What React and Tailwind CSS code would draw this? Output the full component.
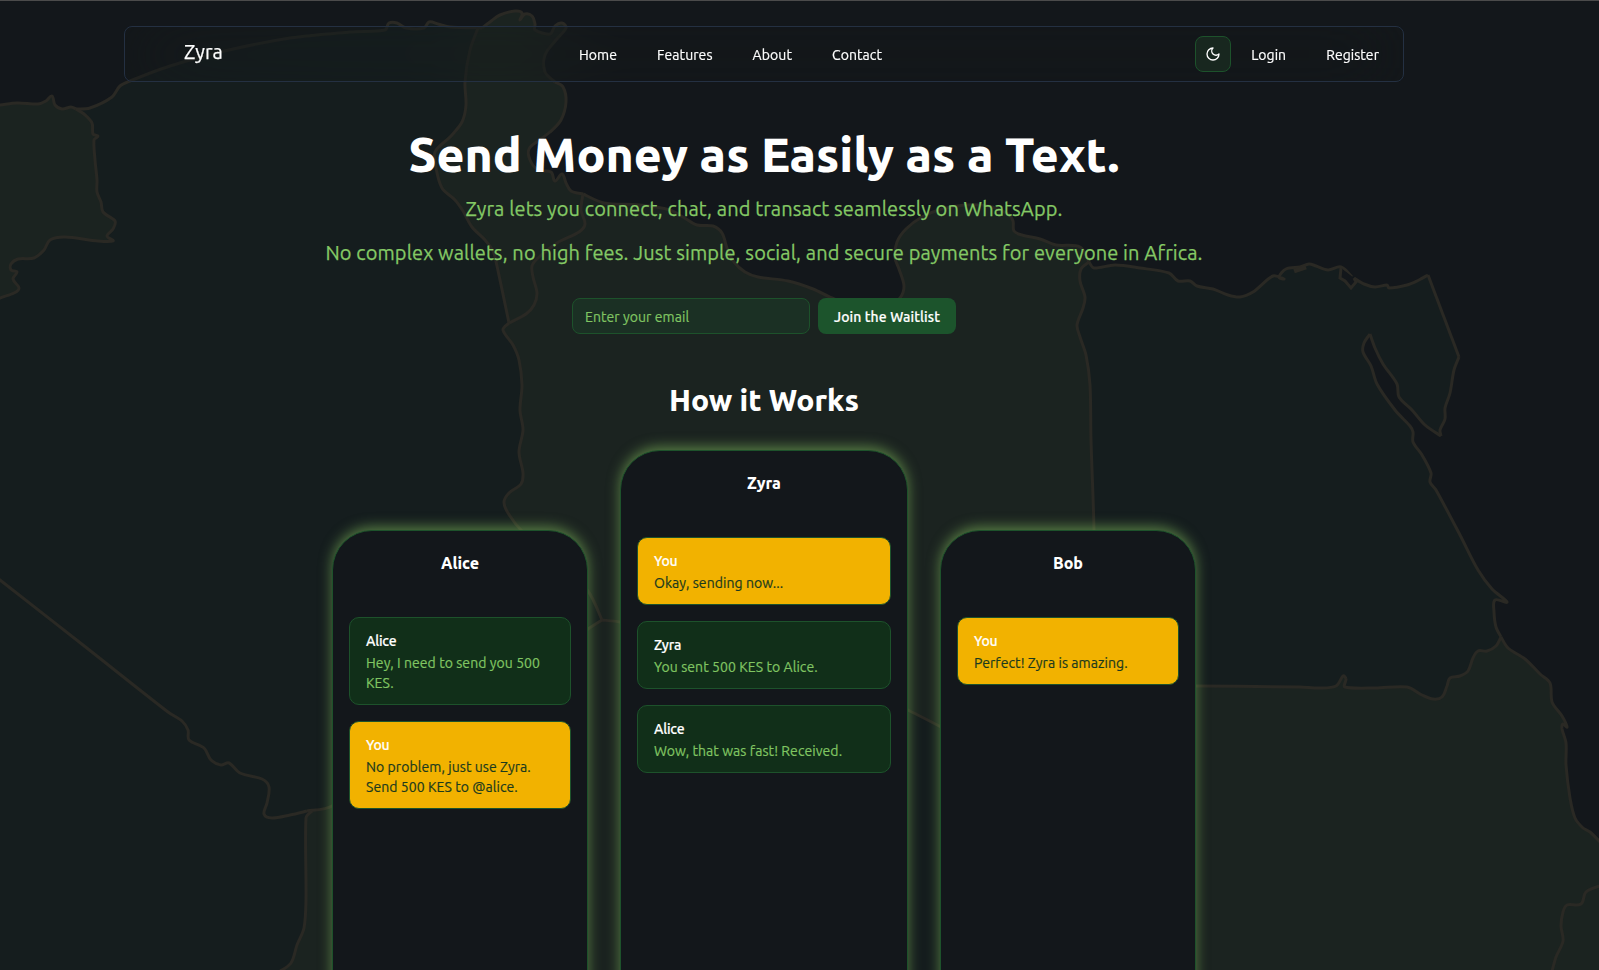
const TEAL = '#151d1e';
const GREEN = '#1b2320';
const BORDER = '#2a2924';

// Country borders as point lists, in page coordinates.
const moroccoCoast = [[-10, 106], [0, 105], [17, 103], [38, 104], [46, 101], [52, 96], [55, 105], [62, 109], [71, 107], [76, 109]];
const moroccoBorder = [[76, 109], [84, 114], [92, 123], [93, 134], [98, 136], [94, 140], [95, 160], [97, 180], [97, 192], [101, 202], [103, 212], [115, 221], [113, 229], [107, 236], [113, 241], [98, 241], [65, 237], [50, 240], [44, 250], [34, 258], [18, 259], [11, 264], [11, 270], [17, 272], [13, 279], [19, 288], [14, 293], [0, 298], [-10, 303]];
const algeriaCoast = [[76, 109], [90, 108], [112, 97], [120, 86], [130, 81], [170, 66], [220, 52], [290, 38], [350, 32], [385, 30], [389, 23], [397, 23], [406, 28], [424, 28], [429, 22], [438, 24], [450, 27], [482, 28]];
const tunisiaNorth = [[482, 28], [490, 22], [500, 15], [515, 11], [522, 13], [520, 20], [525, 14], [532, 16], [535, 24], [535, 30], [550, 34], [555, 26], [562, 23], [566, 28], [556, 40], [545, 55], [545, 72], [555, 82]];
const tunisiaEast = [[555, 82], [563, 87], [566, 102], [561, 120], [550, 132], [538, 141], [529, 149], [530, 160], [538, 170], [551, 172], [555, 181], [562, 174], [566, 183], [571, 191], [583, 194]];
const tunisiaWest = [[478, 28], [470, 50], [465, 82], [466, 105], [462, 122], [450, 137], [435, 152], [436, 168], [442, 188], [455, 200], [463, 211], [472, 227], [485, 240], [493, 251], [497, 266], [509, 323]];
const tunisiaLibya = [[583, 194], [581, 210], [585, 224], [579, 232], [557, 243], [538, 258], [532, 266], [533, 277], [537, 293], [534, 305], [526, 314], [509, 323]];
const libyaCoast = [[583, 194], [604, 203], [640, 205], [670, 210], [683, 217], [697, 225], [713, 226], [722, 233], [727, 248], [734, 262], [745, 272], [758, 277], [788, 281], [813, 289], [832, 298], [858, 308], [885, 310], [900, 298], [904, 286], [899, 269], [895, 258], [897, 242], [906, 229], [922, 217], [942, 209], [965, 205], [988, 206], [1008, 214], [1013, 221], [1014, 231], [1022, 235], [1040, 239], [1056, 245], [1080, 247], [1089, 262]];
const libyaEgypt = [[1089, 262], [1081, 269], [1080, 281], [1085, 297], [1083, 308], [1077, 325], [1080, 337], [1086, 355], [1090, 385], [1091, 440], [1094, 530], [1096, 686]];
const egyptCoast = [[1089, 262], [1094, 268], [1115, 265], [1140, 268], [1169, 273], [1178, 281], [1190, 281], [1197, 286], [1213, 289], [1228, 295], [1240, 297], [1253, 292], [1273, 276], [1284, 279], [1279, 277], [1286, 269], [1300, 267], [1309, 264], [1316, 266], [1328, 270], [1341, 267], [1352, 277]];
const egyptSinai = [[1354, 278], [1364, 284], [1375, 287], [1387, 285], [1389, 288], [1407, 285], [1419, 280], [1428, 275]];
const egyptEast = [[1428, 275], [1459, 357]];
const egyptAqaba = [[1459, 357], [1454, 370], [1450, 393], [1445, 408], [1445, 419], [1440, 430], [1441, 436]];
const egyptGulf = [[1441, 436], [1425, 425], [1412, 410], [1399, 397], [1397, 384], [1383, 364], [1375, 348], [1370, 334]];
const egyptShore = [[1370, 334], [1364, 343], [1363, 352], [1371, 366], [1377, 384], [1395, 410], [1410, 426], [1413, 432], [1413, 442], [1422, 455], [1431, 473], [1430, 482], [1436, 490], [1460, 535], [1478, 570], [1492, 589], [1507, 602], [1495, 600], [1494, 612], [1496, 627], [1501, 637]];
const egyptSudan = [[1501, 637], [1496, 646], [1487, 651], [1478, 651], [1473, 658], [1468, 671], [1460, 676], [1450, 678], [1447, 686], [1442, 697], [1433, 699], [1422, 695], [1407, 687], [1375, 688], [1345, 687], [1346, 679], [1343, 676], [1336, 686], [1320, 688], [1300, 687], [1196, 686], [1096, 686]];
const sudanCoast = [[1501, 637], [1508, 648], [1525, 659], [1540, 674], [1550, 683], [1552, 702], [1562, 716], [1567, 727], [1563, 724], [1562, 729], [1566, 743], [1566, 765], [1570, 798], [1575, 818], [1583, 828], [1590, 832], [1603, 845]];
const sudanEast = [[1603, 885], [1586, 892], [1581, 904], [1567, 905], [1563, 912], [1561, 926], [1563, 941], [1556, 957], [1551, 975]];
const libyaAlgeria = [[509, 323], [503, 330], [513, 345], [519, 360], [522, 385], [520, 410], [523, 430], [519, 452], [523, 473], [521, 484], [509, 493], [504, 502], [508, 513], [522, 531], [560, 565], [588, 591], [602, 620]];
const libyaSouth = [[602, 620], [620, 622], [700, 640], [830, 670], [908, 710], [941, 727], [1000, 760], [1096, 790]];
const algeriaMali = [[-5, 576], [0, 580], [83, 645], [168, 712], [182, 721], [188, 730], [189, 740], [204, 748], [211, 760], [221, 765], [229, 763], [240, 773], [262, 779], [269, 787], [267, 803], [264, 814], [272, 818], [290, 815], [307, 811]];
const nigerNorth = [[307, 811], [332, 806], [588, 629], [602, 620]];
const nigerMali = [[312, 811], [306, 818], [306, 900], [304, 928], [297, 945], [291, 963], [279, 972]];

function smooth(pts, start = 'M') {
  let d = `${start}${pts[0][0]} ${pts[0][1]}`;
  for (let i = 0; i < pts.length - 1; i++) {
    const p0 = pts[i - 1] || pts[i];
    const p1 = pts[i];
    const p2 = pts[i + 1];
    const p3 = pts[i + 2] || p2;
    const len = Math.hypot(p2[0] - p1[0], p2[1] - p1[1]);
    const handle = (a, b) => {
      const l = Math.hypot(b[0] - a[0], b[1] - a[1]) || 1;
      const k = Math.min(len / 3.2, l / 5) / l;
      return [(b[0] - a[0]) * k, (b[1] - a[1]) * k];
    };
    const [ax, ay] = handle(p0, p2);
    const [bx, by] = handle(p1, p3);
    d += `C${(p1[0] + ax).toFixed(1)} ${(p1[1] + ay).toFixed(1)} ${(p2[0] - bx).toFixed(1)} ${(p2[1] - by).toFixed(1)} ${p2[0]} ${p2[1]}`;
  }
  return d;
}

const area = (...segs) => segs.map((s, i) => smooth(s, i ? 'L' : 'M')).join('') + 'Z';
const rev = (s) => [...s].reverse();

const areas = [
  [TEAL, area(moroccoCoast, algeriaCoast, [[470, 60], [470, 200]], [[520, 320], [620, 620]], [[620, 980], [-10, 980]])],
  [TEAL, area([[900, 690], [1196, 680]], [[1196, 980], [900, 980]])],
  [GREEN, area(moroccoCoast, moroccoBorder)],
  [GREEN, area(tunisiaNorth, tunisiaEast, tunisiaLibya, rev(tunisiaWest))],
  [GREEN, area(libyaCoast, libyaEgypt, rev(libyaSouth), rev(libyaAlgeria), rev(tunisiaLibya))],
  [TEAL, area(egyptCoast, egyptSinai, egyptEast, egyptAqaba, egyptGulf, egyptShore, egyptSudan, rev(libyaEgypt))],
  [GREEN, area(sudanCoast, [[1603, 980], [1150, 980]], [[1150, 686]], rev(egyptSudan))],
  [GREEN, area(nigerNorth, [[764, 640], [764, 980]], rev(nigerMali))],
];

const lines = [moroccoCoast, moroccoBorder, algeriaCoast, tunisiaNorth, tunisiaEast, tunisiaWest, tunisiaLibya, libyaCoast, libyaEgypt, egyptCoast, egyptSinai, egyptEast, egyptAqaba, egyptGulf, egyptShore, egyptSudan, sudanCoast, sudanEast, libyaAlgeria, libyaSouth, algeriaMali, nigerNorth, nigerMali];

function AfricaMap() {
  return (
    <svg className="absolute inset-0" width="1599" height="970" viewBox="0 0 1599 970" aria-hidden="true">
      {areas.map(([fill, d], i) => (
        <path key={i} d={d} fill={fill} />
      ))}
      <g fill="none" stroke={BORDER} strokeWidth="3" strokeLinejoin="miter">
        {lines.map((pts, i) => (
          <path key={i} d={smooth(pts)} />
        ))}
        <path d="M1294 271L1306 267" strokeWidth="5" />
        <path d="M1341 268L1340 278L1345 281L1351 288L1356 282L1354 278" fill="#13171b" />
      </g>
    </svg>
  );
}

function Message({ name, text, mine }) {
  return (
    <div className={`rounded-[10px] border border-[#1d522b] px-4 pt-[13px] pb-[11px] ${mine ? 'bg-[#f2b200]' : 'bg-[#112f19]'}`}>
      <div className="text-sm font-medium tracking-[-0.2px] text-white [-webkit-text-stroke:0.2px]">{name}</div>
      <div className={`mt-0.5 text-sm tracking-[0.07px] [-webkit-text-stroke:0.2px] ${mine ? 'text-[#1b3a1e]' : 'text-[#80c562]'}`}>{text}</div>
    </div>
  );
}

function Phone({ title, messages, large }) {
  return (
    <div
      className={`h-[600px] shrink-0 rounded-[40px] border border-[#1d522b] bg-[#13171b] px-4 pt-5 shadow-[0_-3px_13px_rgba(135,195,95,0.58)] ${large ? 'w-72' : 'mt-20 w-64'}`}
    >
      <h3 className="text-center text-base font-extrabold tracking-[-0.05px] text-white">{title}</h3>
      <div className="mt-[42px] flex flex-col gap-4">
        {messages.map((m, i) => (
          <Message key={i} {...m} />
        ))}
      </div>
    </div>
  );
}

const links = ['Home', 'Features', 'About', 'Contact'];

export default function App() {
  return (
    <div className="relative h-[970px] w-[1599px] overflow-hidden bg-[#13171b] font-['Ubuntu','Ubuntu_Sans','Noto_Sans',sans-serif] text-white">
      <AfricaMap />
      <div className="relative flex flex-col items-center border-t border-[#4b4b4b] pr-[71px]">
        <nav className="mt-[25px] flex h-14 w-[1280px] items-center rounded-lg border border-[#243042] bg-[#13171b]/20 backdrop-blur-2xl">
          <div className="w-[454px] pb-1 pl-[59px] text-xl tracking-[0.1px] [-webkit-text-stroke:0.25px]">Zyra</div>
          <div className="flex gap-10 pt-0.5 text-sm tracking-[0.08px] [-webkit-text-stroke:0.2px]">
            {links.map((l) => (
              <a key={l} href="#">{l}</a>
            ))}
          </div>
          <div className="ml-auto flex items-center pr-6 text-sm tracking-[0.05px] [-webkit-text-stroke:0.2px]">
            <button className="mr-5 grid size-9 place-items-center rounded-lg border border-[#1d522b] bg-[#18271f]" aria-label="Theme">
              <svg width="16" height="16" viewBox="0 0 24 24" fill="none" stroke="currentColor" strokeWidth="2" strokeLinecap="round" strokeLinejoin="round">
                <path d="M12 3a6 6 0 0 0 9 9 9 9 0 1 1-9-9Z" />
              </svg>
            </button>
            <a href="#" className="mr-10 pt-0.5">Login</a>
            <a href="#" className="pt-0.5">Register</a>
          </div>
        </nav>

        <h1 className="mt-12 text-5xl leading-[48px] font-extrabold">Send Money as Easily as a Text.</h1>
        <p className="mt-[17px] text-xl tracking-[0.11px] text-[#84c965] [-webkit-text-stroke:0.25px]">Zyra lets you connect, chat, and transact seamlessly on WhatsApp.</p>
        <p className="mt-4 text-xl tracking-[0.11px] text-[#84c965] [-webkit-text-stroke:0.25px]">
          No complex wallets, no high fees. Just simple, social, and secure payments for everyone in Africa.
        </p>

        <div className="mt-[31px] flex gap-2">
          <input
            className="h-9 w-[238px] rounded-lg border border-[#1d522b] bg-[#1b3024] px-3 pt-0.5 text-sm tracking-[0.07px] [-webkit-text-stroke:0.2px] placeholder:text-[#80c562]"
            placeholder="Enter your email"
          />
          <button className="h-9 w-[138px] rounded-lg bg-[#1c542c] pt-0.5 text-sm font-medium tracking-[0.1px] [-webkit-text-stroke:0.2px]">Join the Waitlist</button>
        </div>

        <h2 className="mt-12 text-3xl leading-9 font-extrabold">How it Works</h2>

        <div className="mt-8 flex gap-8">
          <Phone
            title="Alice"
            messages={[
              { name: 'Alice', text: 'Hey, I need to send you 500 KES.' },
              { name: 'You', text: 'No problem, just use Zyra. Send 500 KES to @alice.', mine: true },
            ]}
          />
          <Phone
            large
            title="Zyra"
            messages={[
              { name: 'You', text: 'Okay, sending now...', mine: true },
              { name: 'Zyra', text: 'You sent 500 KES to Alice.' },
              { name: 'Alice', text: 'Wow, that was fast! Received.' },
            ]}
          />
          <Phone title="Bob" messages={[{ name: 'You', text: 'Perfect! Zyra is amazing.', mine: true }]} />
        </div>
      </div>
    </div>
  );
}
